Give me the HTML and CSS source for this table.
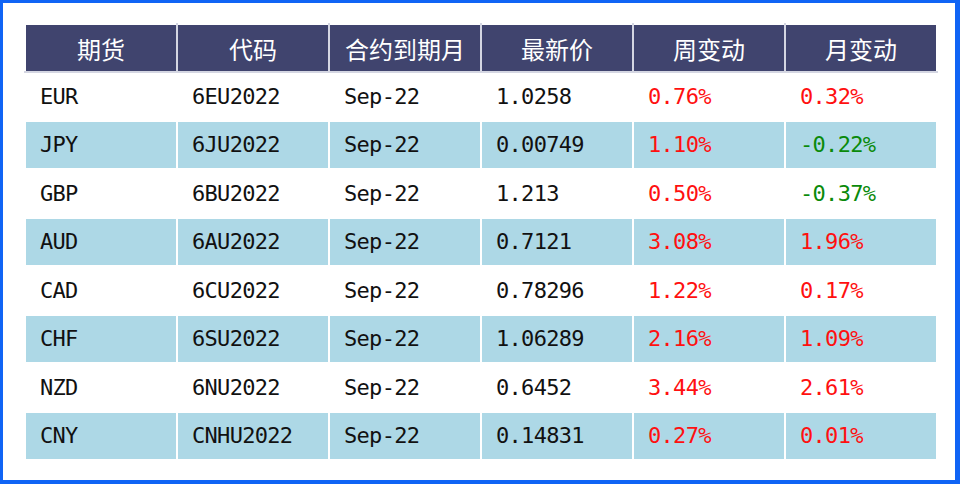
FILE: index.html
```html
<!DOCTYPE html>
<html lang="zh-CN">
<head>
<meta charset="utf-8">
<title>期货</title>
<link rel="stylesheet" href="styles.css">
</head>
<body>
<div class="frame">
  <table class="fx">
    <thead>
      <tr><th>期货</th><th>代码</th><th>合约到期月</th><th>最新价</th><th>周变动</th><th>月变动</th></tr>
    </thead>
    <tbody>
      <tr><td>EUR</td><td>6EU2022</td><td>Sep-22</td><td>1.0258</td><td class="up">0.76%</td><td class="up">0.32%</td></tr>
      <tr class="alt"><td>JPY</td><td>6JU2022</td><td>Sep-22</td><td>0.00749</td><td class="up">1.10%</td><td class="down">-0.22%</td></tr>
      <tr><td>GBP</td><td>6BU2022</td><td>Sep-22</td><td>1.213</td><td class="up">0.50%</td><td class="down">-0.37%</td></tr>
      <tr class="alt"><td>AUD</td><td>6AU2022</td><td>Sep-22</td><td>0.7121</td><td class="up">3.08%</td><td class="up">1.96%</td></tr>
      <tr><td>CAD</td><td>6CU2022</td><td>Sep-22</td><td>0.78296</td><td class="up">1.22%</td><td class="up">0.17%</td></tr>
      <tr class="alt"><td>CHF</td><td>6SU2022</td><td>Sep-22</td><td>1.06289</td><td class="up">2.16%</td><td class="up">1.09%</td></tr>
      <tr><td>NZD</td><td>6NU2022</td><td>Sep-22</td><td>0.6452</td><td class="up">3.44%</td><td class="up">2.61%</td></tr>
      <tr class="alt"><td>CNY</td><td>CNHU2022</td><td>Sep-22</td><td>0.14831</td><td class="up">0.27%</td><td class="up">0.01%</td></tr>
    </tbody>
  </table>
</div>
</body>
</html>
```

FILE: styles.css
```css
html, body {
  margin: 0;
  padding: 0;
  background: #ffffff;
}

.frame {
  box-sizing: border-box;
  width: 960px;
  height: 484px;
  border-style: solid;
  border-color: #1064f5;
  border-width: 3px 5px 4px 3px;
  padding: 20px 0 0 21px;
  background: #ffffff;
}

.fx {
  border-collapse: collapse;
  table-layout: fixed;
  width: 914px;
}

.fx th {
  height: 46px;
  padding: 0;
  background: #40446e;
  color: #ffffff;
  font-family: "Noto Sans CJK SC", "Noto Sans", sans-serif;
  font-weight: 400;
  font-size: 24px;
  text-align: center;
  border: 2px solid #d4d6e2;
  border-top-color: #ffffff;
}

.fx th:first-child { border-left-color: #ffffff; }
.fx th:last-child { border-right-color: #ffffff; }

.fx td {
  height: 46.5px;
  padding: 0 0 0 14px;
  font-family: "DejaVu Sans Mono", "Liberation Mono", monospace;
  font-size: 22px;
  letter-spacing: -0.7px;
  color: #111111;
  border: 2px solid #ffffff;
  white-space: nowrap;
}

.fx tr.alt td {
  background: #add8e6;
}

.fx td.up { color: #ff1010; }
.fx td.down { color: #0a8a0a; }
```
